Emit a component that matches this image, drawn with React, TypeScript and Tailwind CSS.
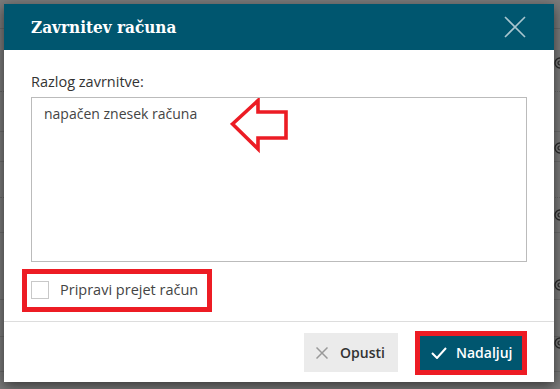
import React from "react";

const rows = [
  { h: 29, c: "border-[#6b6b6b]" },
  { h: 63, c: "border-[#666] border-dotted" },
  { h: 40, c: "border-[#6b6b6b]" },
  { h: 30, c: "border-[#6b6b6b]" },
  { h: 36, c: "border-[#666] border-dotted" },
  { h: 35, c: "border-[#6b6b6b]" },
  { h: 67, c: "border-[#6b6b6b]" },
  { h: 37, c: "border-[#6b6b6b]" },
  { h: 35, c: "border-[#6b6b6b]" },
];

const glyphTops = [57, 142, 209, 279, 337];

export default function App() {
  return (
    <div
      className="relative w-[560px] h-[389px] overflow-hidden bg-[#7a7a7a]"
      style={{ fontFamily: "'Open Sans', 'Noto Sans', sans-serif" }}
    >
      {/* dimmed page behind */}
      <div className="flex flex-col">
        {rows.map((r, i) => (
          <div key={i} className={`border-b ${r.c}`} style={{ height: r.h }} />
        ))}
      </div>
      {glyphTops.map((t, i) => (
        <svg
          key={i}
          className="absolute left-[554px]"
          style={{ top: t }}
          width="12"
          height="12"
          viewBox="0 0 12 12"
        >
          <circle cx="6" cy="6" r="5" fill="none" stroke="#2a2a2a" strokeWidth="1.3" />
          <circle cx="6" cy="6" r="2" fill="none" stroke="#2a2a2a" strokeWidth="1.2" />
        </svg>
      ))}

      {/* dialog */}
      <div className="absolute left-[4px] top-[4px] w-[550px] h-[378px] bg-white flex flex-col shadow-[0_4px_12px_rgba(0,0,0,0.55)]">
        <div className="h-[46px] shrink-0 bg-[#00566f] flex items-center justify-between pl-[27px] pr-[28px]">
          <span
            className="text-white font-bold text-[17px] font-stretch-condensed leading-none pt-[1px]"
            style={{ fontFamily: "'DejaVu Serif Condensed', 'DejaVu Serif', serif" }}
          >
            Zavrnitev računa
          </span>
          <svg width="22" height="22" viewBox="0 0 22 22" className="mt-[-1px]">
            <path d="M1 1 L21 21 M21 1 L1 21" stroke="#a9c6cf" strokeWidth="1.6" />
          </svg>
        </div>

        <div className="px-[27px] pt-[22px] flex flex-col">
          <div className="text-[14.5px] leading-[20px] text-[#333]">Razlog zavrnitve:</div>
          <div className="relative mt-[5px] h-[165px] border border-[#bbb] px-[12px] pt-[6px] text-[14px] leading-[20px] text-[#444]">
            napačen znesek računa
            <svg
              className="absolute left-[198px] top-[0px]"
              width="60"
              height="56"
              viewBox="0 0 60 56"
            >
              <polygon
                points="2.5,26 28,2.5 28,14 56,14 56,40 28,40 28,51"
                fill="none"
                stroke="#ec1c24"
                strokeWidth="3.6"
                strokeLinejoin="miter"
              />
            </svg>
          </div>
          <div className="mt-[7px] ml-[-9px] w-[190px] h-[43px] border-[5px] border-[#ed1c24] flex items-center pl-[4px]">
            <span className="w-[18px] h-[18px] border border-[#c8c8c8] bg-white mt-[-2px]" />
            <span className="ml-[11px] text-[14.5px] leading-[20px] text-[#444] mt-[-2px]">
              Pripravi prejet račun
            </span>
          </div>
        </div>

        <div className="mt-[9px] border-t border-[#ddd] flex-1 flex items-center justify-end pr-[27px] gap-[17px]">
          <button className="w-[94px] h-[39px] bg-[#ebebeb] flex items-center pl-[12px] mt-[1px]">
            <svg width="12" height="12" viewBox="0 0 12 12">
              <path d="M0.5 0.5 L11.5 11.5 M11.5 0.5 L0.5 11.5" stroke="#999" strokeWidth="1.5" />
            </svg>
            <span className="ml-[12px] text-[14px] font-semibold text-[#333]">Opusti</span>
          </button>
          <div className="border-[5px] border-[#ed1c24] mt-[1px]">
            <button className="w-[102px] h-[34px] bg-[#00566f] flex items-center pl-[11px]">
              <svg width="16" height="12" viewBox="0 0 16 12">
                <path d="M1 6 L6 11 L15 1" fill="none" stroke="#fff" strokeWidth="2" />
              </svg>
              <span className="ml-[9px] text-[14px] font-semibold text-white">Nadaljuj</span>
            </button>
          </div>
        </div>
      </div>
    </div>
  );
}
